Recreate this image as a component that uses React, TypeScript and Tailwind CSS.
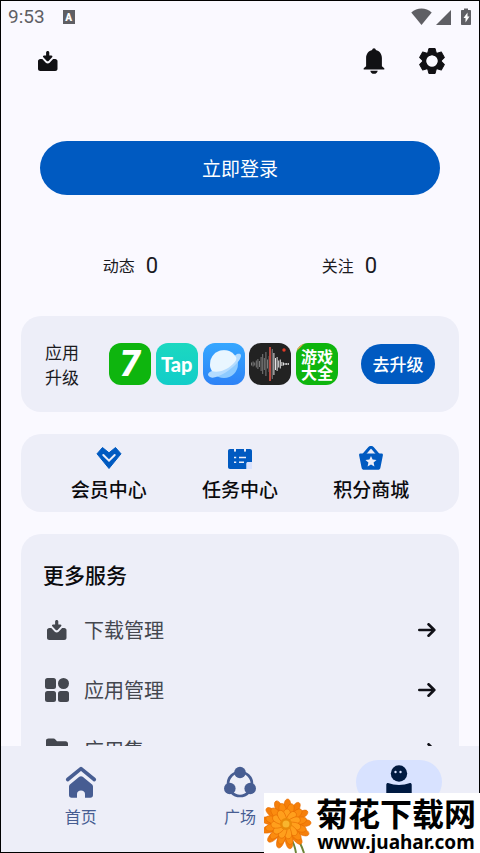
import type {ReactNode} from 'react';

const WAVE = [3, 5, 3, 7, 10, 6, 14, 20, 12, 24, 9, 16, 27, 30, 22, 12, 14, 7, 9, 4, 3, 2, 2, 2];

function DownloadIcon() {
    return (
        <svg width="20" height="20" viewBox="0 0 20 20" fill="currentColor">
            <path d="M9.700 0c.9 0 1.600.7 1.600 1.500V4.500h2c1.100 0 1.500.9.800 1.700l-3.500 3.700c-.5.500-1.300.5-1.800 0L5.300 6.200C4.600 5.400 5 4.500 6.100 4.500h2v-3C8.100.7 8.800 0 9.700 0z"/>
            <path d="M2.300 8h2l3.500 3.700c1.100 1.100 2.700 1.100 3.800 0L15.100 8h2.100c1.300 0 2.300 1 2.300 2.200v7.500c0 1.300-1 2.300-2.300 2.300H2.300C1 20 0 19 0 17.700v-7.500C0 9 1 8 2.300 8z"/>
        </svg>
    );
}

function BellIcon() {
    return (
        <svg width="22" height="26" viewBox="0 0 22 26" fill="currentColor">
            <path d="M11 .3c1 0 1.700.7 1.800 1.800 3.700.9 6.100 4 6.100 7.900v8.200l2.400 2v1.300H.7v-1.300l2.400-2V10c0-3.900 2.400-7 6.100-7.900C9.300 1 10 .3 11 .3z"/>
            <path d="M7.300 22.700h7.400c-.3 1.900-1.700 3.100-3.700 3.100s-3.400-1.200-3.700-3.100z"/>
        </svg>
    );
}

function GearIcon() {
    return (
        <svg width="26" height="26" viewBox="-13 -13 26 26">
            <g fill="currentColor">
                {[0, 60, 120, 180, 240, 300].map((angle) => (
                    <path key={angle} d="M-3.100-12.500h6.200l1.300 5h-8.800z" transform={`rotate(${angle})`} stroke="currentColor" strokeWidth="1" strokeLinejoin="round"/>
                ))}
            </g>
            <circle r="7.500" fill="none" stroke="currentColor" strokeWidth="4"/>
            <circle r="5.600" fill="#faf9ff"/>
        </svg>
    );
}

function GridIcon() {
    return (
        <svg width="24" height="24" viewBox="0 0 24 24" fill="currentColor">
            <rect width="11" height="11" rx="2.500"/>
            <circle cx="18.500" cy="5.500" r="5.500"/>
            <rect y="13" width="11" height="11" rx="2.500"/>
            <rect x="13" y="13" width="11" height="11" rx="2.500"/>
        </svg>
    );
}

function FolderIcon() {
    return (
        <svg width="22" height="24" viewBox="0 0 22 24" fill="currentColor">
            <path d="M2.500.5h5c.8 0 1.400.3 1.900.9L11 3.300h8.500c1.500 0 2.500 1 2.500 2.500V19c0 1.700-1 2.500-2.500 2.500h-17C1 21.500 0 20.500 0 19V2.500C0 1.300 1 .5 2.500.5z"/>
        </svg>
    );
}

function ArrowIcon() {
    return (
        <svg width="18" height="14" viewBox="0 0 18 14" fill="none" stroke="currentColor" strokeWidth="2.600" strokeLinecap="round" strokeLinejoin="round">
            <path d="M1.300 7h15M10.500 1.300 16.300 7l-5.800 5.700"/>
        </svg>
    );
}

function MemberIcon() {
    return (
        <svg width="26" height="24" viewBox="0 0 26 24" fill="none">
            <path d="M6.500 1.500 13 6.800l6.500-5.300 5.500 6.300L13 22.500 1 7.800z" fill="#005ac1" stroke="#005ac1" strokeLinejoin="round"/>
            <path d="m7.300 9 5.700 5.700L18.700 9" stroke="#edeef8" strokeWidth="2" strokeLinecap="round"/>
        </svg>
    );
}

function TaskIcon() {
    return (
        <svg width="24" height="24" viewBox="0 0 24 24">
            <path d="M18.500 15.800H24V23h-5.500z" fill="#d8e2ff"/>
            <path d="M2 3h4v1.700c0 .6.400 1 1 1s1-.4 1-1V3h8v1.700c0 .6.400 1 1 1s1-.4 1-1V3h4c1.200 0 2 .8 2 2v11h-4c-1 0-1.700.7-1.700 1.700V23H2c-1.200 0-2-.8-2-2V5c0-1.200.8-2 2-2z" fill="#005ac1"/>
            <path d="M6 11.500h2.200M11 11.500h7M6 16.300h2.200M11 16.300h5" stroke="#edeef8" strokeWidth="1.600"/>
        </svg>
    );
}

function BasketIcon() {
    return (
        <svg width="26" height="24" viewBox="0 0 26 24">
            <path d="m5.500 9 6-7c.8-.9 2.200-.9 3 0l6 7" fill="none" stroke="#005ac1" strokeWidth="3"/>
            <path d="M2.500 7.500h21c1 0 1.600.7 1.400 1.700l-2.500 12.500c-.3 1.300-1.200 2.100-2.500 2.100H6.100c-1.300 0-2.200-.8-2.500-2.100L1.100 9.200C.9 8.200 1.500 7.500 2.500 7.500z" fill="#005ac1"/>
            <path d="m13 9.900 1.600 3.600 3.900.4-2.900 2.600.8 3.900-3.400-2-3.400 2 .8-3.900-2.900-2.600 3.900-.4z" fill="#edeef8"/>
        </svg>
    );
}

function HomeIcon() {
    return (
        <svg width="32" height="32" viewBox="0 0 32 32" fill="currentColor">
            <path d="M2.700 13.500 16 2.700l13.300 10.800" fill="none" stroke="currentColor" strokeWidth="3.600" strokeLinecap="round" strokeLinejoin="round"/>
            <path d="M14.300 10.800c1-.8 2.400-.8 3.400 0l8.800 7.200c1 .8 1.500 1.600 1.500 2.700V29c0 1.700-1 2.700-2.700 2.700H20V28c0-2-1.600-3.400-4-3.400S12 26 12 28v3.700H6.700C5 31.700 4 30.700 4 29v-8.300c0-1.100.5-1.900 1.500-2.700z"/>
        </svg>
    );
}

function SquareIcon() {
    return (
        <svg width="32" height="32" viewBox="0 0 32 32" fill="currentColor">
            <circle cx="16" cy="18" r="12" fill="none" stroke="currentColor" strokeWidth="2.700"/>
            <circle cx="16" cy="6.500" r="5.800"/>
            <circle cx="5.800" cy="22.500" r="5.800"/>
            <circle cx="26.200" cy="22.500" r="5.800"/>
        </svg>
    );
}

function ProfileIcon() {
    return (
        <svg width="32" height="34" viewBox="0 0 32 34">
            <path d="M5 18c7 2.500 15 2.500 22 0 1 0 1.700.7 1.700 1.700V32H3.300V19.700C3.300 18.700 4 18 5 18z" fill="#001a41"/>
            <circle cx="16" cy="8.500" r="8.200" fill="#001a41"/>
            <circle cx="12.500" cy="7" r="1.200" fill="#d8e2ff"/>
            <circle cx="17.500" cy="7" r="1.200" fill="#d8e2ff"/>
        </svg>
    );
}

function PlanetIcon() {
    return (
        <svg viewBox="0 0 42 42" className="size-full">
            <circle cx="21" cy="21" r="14" fill="#8ecbff"/>
            <path d="M5 32c3 5 9 2 15-1 7-4 14-10 17-15 2-4 1-6-3-5l-4 3-21 14c-3 1-4 2-4 4z" fill="#b4dcff"/>
            <path d="M7 22a14 14 0 0 1 26-8c1 2 0 4-3 7-7 7-16 9-21 7-1-2-2-4-2-6z" fill="#e9f6ff"/>
        </svg>
    );
}

function WaveIcon() {
    return (
        <svg viewBox="0 0 42 42" className="size-full">
            {WAVE.map((height, i) => (
                <rect key={i} x={2 + i * 1.6} y={21 - height / 2} width="1" height={height} fill={i > 13 ? '#e4e4e4' : '#7b7b7b'}/>
            ))}
            <rect x="20" y="4" width="2" height="34" fill="#b8483f"/>
            <circle cx="35" cy="7" r="1.700" fill="#e23b28"/>
        </svg>
    );
}

function Flower() {
    const petals = (count: number, length: number, offset: number, fill: string) =>
        Array.from({length: count}, (_, i) => (
            <path key={`${length}-${i}`} d={`M-1.500 0C-5-${length * 0.6}-4-${length} 0-${length}S5-${length * 0.6} 1.500 0z`} fill={fill} stroke="#e56a00" strokeWidth=".6" transform={`rotate(${offset + (i * 360) / count})`}/>
        ));

    return (
        <svg width="48" height="60" viewBox="0 0 48 60" className="shrink-0">
            <path d="M27 46c3 4 4 8 5 14M32 44c4 4 6 10 8 16" fill="none" stroke="#6d8437" strokeWidth="2"/>
            <g transform="translate(22 31)">
                {petals(13, 25, 4, '#f57f0a')}
                {petals(12, 21, 17, '#fb8c0f')}
                {petals(11, 15, 5, '#ff9f1c')}
                <circle r="6" fill="#e98a08"/>
                <circle r="3.500" fill="#f8b52e"/>
            </g>
        </svg>
    );
}

const tileClass = 'relative size-[42px] shrink-0 rounded-xl overflow-hidden flex items-center justify-center text-white';

const shortcuts = [
    {label: '会员中心', icon: <MemberIcon/>},
    {label: '任务中心', icon: <TaskIcon/>},
    {label: '积分商城', icon: <BasketIcon/>},
];

const services = [
    {label: '下载管理', icon: <DownloadIcon/>},
    {label: '应用管理', icon: <GridIcon/>},
    {label: '应用集', icon: <FolderIcon/>},
];

function StatusBar() {
    return (
        <div className="flex h-8 shrink-0 items-center justify-between pl-[7px] pr-2 text-[#5f5f64]">
            <div className="flex items-center gap-[18px]">
                <span className="font-[Roboto] text-[19px]">9:53</span>
                <span className="flex h-[14px] w-3 items-center justify-center bg-[#5f5f64] font-[Roboto] text-[10px] font-black text-white">A</span>
            </div>
            <div className="flex items-center" aria-hidden="true">
                <svg width="60" height="18" viewBox="0 0 60 18" fill="currentColor">
                    <path d="M.3 4.500C6-.8 15-.8 20.700 4.500L10.500 17z"/>
                    <path d="M40 2v15H25z"/>
                    <path d="M53 .5h4V2h2.200c.5 0 .8.300.8.800v13.400c0 .5-.3.800-.8.800h-8.400c-.5 0-.8-.3-.8-.8V2.800c0-.5.300-.8.800-.8H53z"/>
                    <path d="M56.500 4.500 52.500 10h2v4.500l4-6h-2z" fill="#fff"/>
                </svg>
            </div>
        </div>
    );
}

function Stat({label, value}: { label: string; value: number }) {
    return (
        <div className="flex flex-1 items-center justify-center gap-[11px]">
            <span className="text-base">{label}</span>
            <span className="font-[Roboto] text-[22px]">{value}</span>
        </div>
    );
}

function NavItem({label, icon, active}: { label?: string; icon: ReactNode; active?: boolean }) {
    return (
        <a href="#" aria-label={label ? undefined : 'profile'} className="flex flex-1 flex-col items-center">
            <span className={active ? 'flex h-11 w-[86px] items-center justify-center rounded-full bg-[#d8e2ff]' : 'flex h-11 w-[86px] items-center justify-center'}>
                {icon}
            </span>
            <span className="h-6 text-base leading-6">{label}</span>
        </a>
    );
}

export default function App() {
    return (
        <div className="relative flex h-screen flex-col border border-black bg-[#faf9ff] font-['Noto_Sans_CJK_SC',sans-serif] text-[#1b1b1f]">
            <StatusBar/>

            <header className="flex h-14 shrink-0 items-center pl-[35px] pr-[34px] text-[#111114]">
                <button aria-label="download" className="flex w-6 justify-center"><DownloadIcon/></button>
                <button aria-label="notifications" className="ml-auto"><BellIcon/></button>
                <button aria-label="settings" className="ml-[34px]"><GearIcon/></button>
            </header>

            <main className="min-h-0 flex-1 overflow-y-auto px-5 [scrollbar-width:none]">
                <div className="px-[19px] pt-[52px]">
                    <button className="h-[54px] w-full rounded-full bg-[#005ac1] text-[19px] text-white">立即登录</button>
                </div>

                <div className="mt-[54px] flex h-8">
                    <Stat label="动态" value={0}/>
                    <Stat label="关注" value={0}/>
                </div>

                <section className="mt-[35px] flex h-24 items-center rounded-[20px] bg-[#edeef8] px-6">
                    <p className="w-[34px] text-[17px] leading-[25px]">应用升级</p>
                    <div className="ml-[30px] flex w-[229px] justify-between">
                        <div className={`${tileClass} bg-[#0eb50e] font-[Roboto] text-[36px] font-black italic leading-none`}>7</div>
                        <div className={`${tileClass} bg-linear-to-b from-[#1cd8c0] to-[#12cdc9] font-[Lato] text-xl font-black`}>Tap</div>
                        <div className={`${tileClass} bg-linear-to-b from-[#37a7ff] to-[#2e82f6]`}><PlanetIcon/></div>
                        <div className={`${tileClass} bg-[#222222]`}><WaveIcon/></div>
                        <div className={`${tileClass} bg-[#0eb50e] text-center text-base font-bold leading-4`}>
                            <span className="absolute -left-3 top-0 h-1 w-8 -rotate-45 bg-[#f5a04a]"/>
                            <span className="w-8">游戏大全</span>
                        </div>
                    </div>
                    <button className="ml-auto h-10 w-[74px] rounded-full bg-[#005ac1] text-[17px] font-medium text-white">去升级</button>
                </section>

                <section className="mt-[22px] flex h-[78px] rounded-[20px] bg-[#edeef8] px-[22px] pt-3">
                    {shortcuts.map(({label, icon}) => (
                        <a key={label} href="#" className="flex flex-1 flex-col items-center gap-[5px] text-[19px] font-medium leading-7 text-[#0b0b0e]">
                            {icon}
                            {label}
                        </a>
                    ))}
                </section>

                <section className="mt-[22px] rounded-[20px] bg-[#edeef8] px-[22px] pb-4 pt-[25px]">
                    <h2 className="text-[21px] font-medium leading-[30px] text-[#0b0b0e]">更多服务</h2>
                    <ul className="mt-[11px]">
                        {services.map(({label, icon}) => (
                            <li key={label}>
                                <a href="#" className="flex h-[60px] items-center pr-px text-xl text-[#44474f]">
                                    <span className="flex w-7 justify-center">{icon}</span>
                                    <span className="ml-[13px] flex-1">{label}</span>
                                    <span className="text-[#111118]"><ArrowIcon/></span>
                                </a>
                            </li>
                        ))}
                    </ul>
                </section>
            </main>

            <nav className="flex h-[106px] shrink-0 bg-[#edeef8] pt-[14px] text-[#475d92]">
                <NavItem label="首页" icon={<HomeIcon/>}/>
                <NavItem label="广场" icon={<SquareIcon/>}/>
                <NavItem icon={<ProfileIcon/>} active/>
            </nav>

            {/* site badge pinned over the corner */}
            <div className="absolute -bottom-px -right-px flex h-[60px] w-[216px] bg-white text-black">
                <Flower/>
                <div className="flex flex-1 flex-col items-center whitespace-nowrap">
                    <span className="text-[32px] font-bold leading-[38px]">菊花下载网</span>
                    <span className="font-['Noto_Sans'] text-[19px] font-bold leading-[22px]">www.juahar.com</span>
                </div>
            </div>
        </div>
    );
}
